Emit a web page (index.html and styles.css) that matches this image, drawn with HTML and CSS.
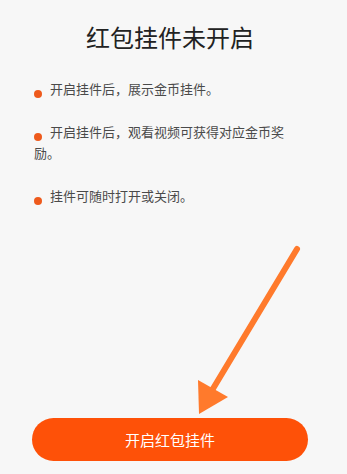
FILE: index.html
```html
<!DOCTYPE html>
<html lang="zh-CN">
<head>
<meta charset="utf-8">
<link rel="stylesheet" href="styles.css">
</head>
<body>
<div class="page">
  <h1 class="title">红包挂件未开启</h1>
  <ul class="tips">
    <li class="tip"><span class="dot"></span>开启挂件后，展示金币挂件。</li>
    <li class="tip"><span class="dot"></span>开启挂件后，观看视频可获得对应金币奖励。</li>
    <li class="tip"><span class="dot"></span>挂件可随时打开或关闭。</li>
  </ul>
  <div class="spacer"></div>
  <button class="btn">开启红包挂件</button>
  <svg class="arrow" width="347" height="474" viewBox="0 0 347 474">
    <line x1="297" y1="249" x2="211" y2="392" stroke="#FF7A2C" stroke-width="6" stroke-linecap="round"/>
    <polygon points="198,380 228,397 199,414" fill="#FF7A2C"/>
  </svg>
</div>
</body>
</html>
```

FILE: styles.css
```css
* { box-sizing: border-box; }
html, body {
  margin: 0;
  padding: 0;
  background: #f7f7f7;
  font-family: "Noto Sans CJK SC", "Noto Sans", sans-serif;
}
.page {
  position: relative;
  min-height: 474px;
  display: flex;
  flex-direction: column;
  padding: 20px 39px 13px 32px;
}
.title {
  margin: 0;
  font-size: 24px;
  line-height: 34px;
  font-weight: 400;
  color: #222;
  text-align: center;
}
.tips {
  list-style: none;
  margin: 24px 0 0;
  padding: 0 0 0 2px;
}
.tip {
  font-size: 13px;
  line-height: 21px;
  color: #4a4a4a;
  margin-bottom: 22px;
}
.dot {
  display: inline-block;
  width: 8px;
  height: 8px;
  border-radius: 50%;
  background: #EE5A1C;
  vertical-align: -4px;
  margin-right: 8px;
}
.spacer { flex: 1; }
.btn {
  display: block;
  width: 276px;
  height: 43px;
  border: 0;
  border-radius: 22px;
  background: #FE5108;
  color: #fff;
  font-family: inherit;
  font-size: 15px;
  padding: 0;
}
.arrow {
  position: absolute;
  left: 0;
  top: 0;
  pointer-events: none;
}
```
